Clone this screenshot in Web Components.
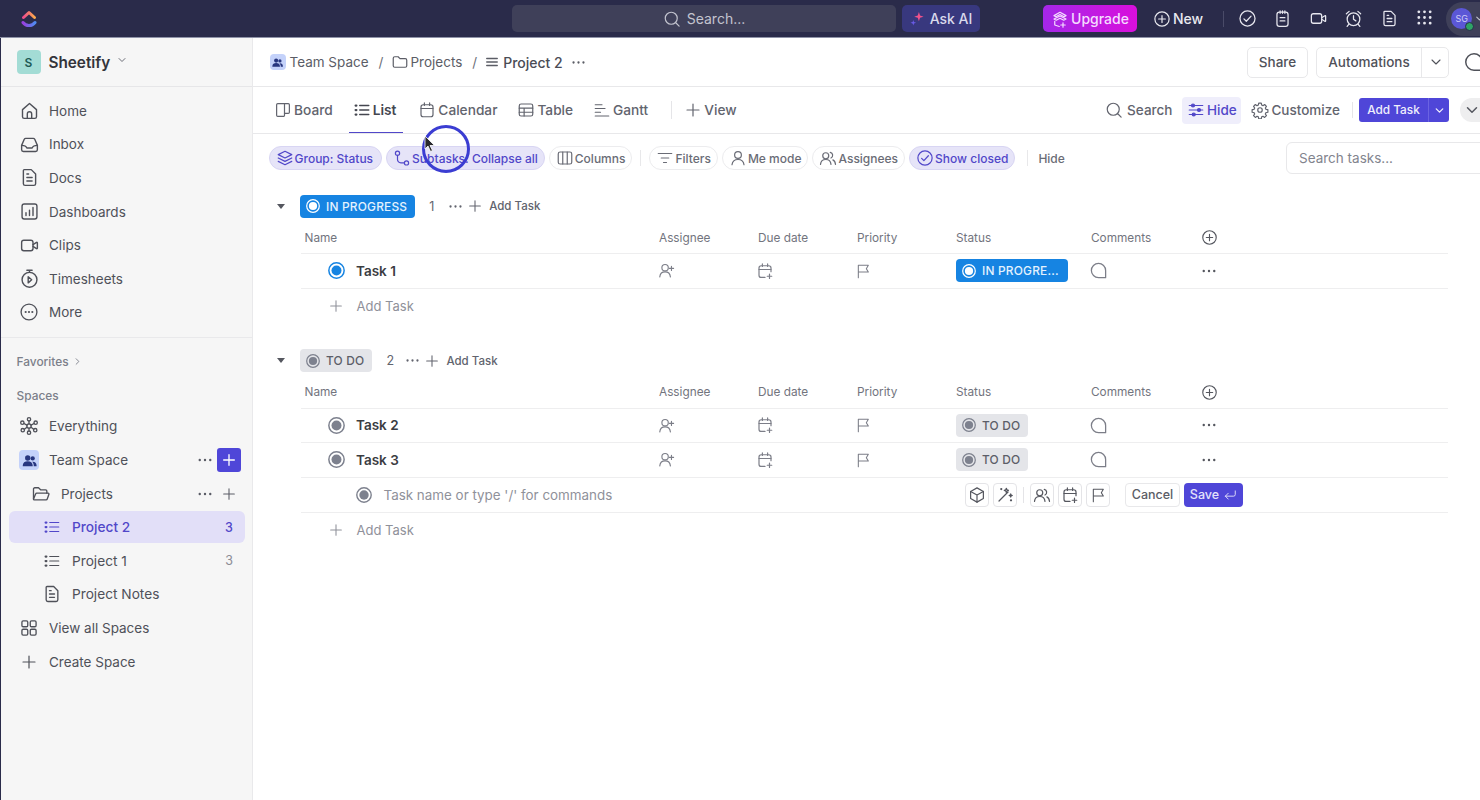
<!DOCTYPE html>
<html lang="en">
<head>
<meta charset="utf-8">
<title>Project 2</title>
<style>
  html, body { margin: 0; height: 100%; overflow: hidden; background: #fff; }
  body { font-family: Inter, "Liberation Sans", sans-serif; color: #4f5159; }
</style>
</head>
<body>
<cu-app></cu-app>

<script>
//Icon paths, all on a 24 box
const ICONS = {
  home: '<path d="M4 11l8-7 8 7v8a2 2 0 0 1-2 2H6a2 2 0 0 1-2-2z"/><path d="M9.500 21v-5a2.500 2.500 0 0 1 5 0v5"/>',
  inbox: '<path d="M3 13l3-7a2 2 0 0 1 2-1h8a2 2 0 0 1 2 1l3 7v5a2 2 0 0 1-2 2H5a2 2 0 0 1-2-2z"/><path d="M3 13c3 0 5 .5 6 3h6c1-2.500 3-3 6-3"/>',
  doc: '<path d="M6 3h8l5 5v11a2 2 0 0 1-2 2H7a2 2 0 0 1-2-2V4a1 1 0 0 1 1-1z"/><path d="M9 12h6M9 16h6M9 8h2"/>',
  dash: '<rect x="3.500" y="3.500" width="17" height="17" rx="2.500"/><path d="M8 16.500v-3M12 16.500v-6M16 16.500v-9"/>',
  clip: '<rect x="3" y="6" width="13" height="12" rx="2.500"/><path d="M16 11l4-2.500a.6.6 0 0 1 1 .5v6a.6.6 0 0 1-1 .5L16 13"/>',
  timer: '<circle cx="12" cy="13.500" r="8.500"/><path d="M9 2.500h6M12 2.500v2.500"/><path d="M10.500 10l4 3.500-4 3.500z"/>',
  more: '<circle cx="12" cy="12" r="9.500"/><path d="M8 12h.01M12 12h.01M16 12h.01" stroke-width="2.600" stroke-linecap="round"/>',
  everything: '<circle cx="12" cy="12" r="2.600"/><circle cx="12" cy="4" r="2"/><circle cx="12" cy="20" r="2"/><circle cx="4" cy="8" r="2"/><circle cx="20" cy="8" r="2"/><circle cx="4.500" cy="17" r="2"/><circle cx="19.500" cy="17" r="2"/><path d="M12 6v3.500M12 14.500V18M6 9l3.500 2M18 9l-3.500 2M6.500 16l3-2.500M17.500 16l-3-2.500"/>',
  folderOpen: '<path d="M3 18V6a1.500 1.500 0 0 1 1.500-1.500h4.500l2.500 2.500h6a1.500 1.500 0 0 1 1.500 1.500V11"/><path d="M3 18l2.500-6a1.500 1.500 0 0 1 1.400-1h13.600a1 1 0 0 1 1 1.400L19.500 18a1.500 1.500 0 0 1-1.400 1H4a1 1 0 0 1-1-1z"/>',
  folder: '<path d="M3 7a2 2 0 0 1 2-2h4.500l2.500 2.500h7a2 2 0 0 1 2 2V17a2 2 0 0 1-2 2H5a2 2 0 0 1-2-2z"/>',
  list: '<path d="M9 6h12M9 12h12M9 18h12"/><path d="M3.500 6h1M3.500 12h1M3.500 18h1" stroke-width="3" stroke-linecap="round"/>',
  listThin: '<path d="M3 6h18M3 12h18M3 18h18"/>',
  grid4: '<rect x="3.500" y="3.500" width="7" height="7" rx="1.500"/><rect x="13.500" y="3.500" width="7" height="7" rx="1.500"/><rect x="3.500" y="13.500" width="7" height="7" rx="1.500"/><rect x="13.500" y="13.500" width="7" height="7" rx="1.500"/>',
  plus: '<path d="M12 4v16M4 12h16"/>',
  chevDown: '<path d="M6 9l6 6 6-6"/>',
  chevRight: '<path d="M9 6l6 6-6 6"/>',
  dots: '<path d="M5 12h.01M12 12h.01M19 12h.01" stroke-width="3.200" stroke-linecap="round"/>',
  search: '<circle cx="11" cy="11" r="8"/><path d="M17 17l4.500 4.500"/>',
  board: '<path d="M5 3.500h14a1.500 1.500 0 0 1 1.500 1.500v10a1.500 1.500 0 0 1-1.500 1.500h-5V19a1.500 1.500 0 0 1-1.500 1.500H5A1.500 1.500 0 0 1 3.500 19V5A1.500 1.500 0 0 1 5 3.500z"/><path d="M14 3.500v13"/>',
  calendar: '<rect x="4" y="5" width="16" height="16" rx="3"/><path d="M4 10h16M8.500 2.500V6M15.500 2.500V6"/>',
  table: '<rect x="3" y="4" width="18" height="16" rx="2.500"/><path d="M3 9.500h18M3 15h18M9.500 9.500V20"/>',
  gantt: '<path d="M3 5h9M3 10h13M3 15h7M3 20h18"/>',
  sliders: '<path d="M3 6h18M3 12h18M3 18h18"/><circle cx="8" cy="6" r="2" fill="currentColor"/><circle cx="16" cy="12" r="2" fill="currentColor"/><circle cx="9" cy="18" r="2" fill="currentColor"/>',
  gear: '<circle cx="12" cy="12" r="3"/><path d="M10.300 2.800h3.400l.5 2.600 1.800.8 2.200-1.500 2.400 2.400-1.500 2.200.8 1.800 2.600.5v3.400l-2.600.5-.8 1.800 1.500 2.200-2.400 2.400-2.200-1.500-1.800.8-.5 2.600h-3.400l-.5-2.600-1.800-.8-2.200 1.500-2.400-2.400 1.500-2.200-.8-1.800-2.600-.5v-3.400l2.600-.5.8-1.800-1.500-2.200 2.400-2.400 2.200 1.500 1.800-.8z"/>',
  layers: '<path d="M12 3l9 4.500-9 4.500-9-4.500z"/><path d="M3 12l9 4.500 9-4.500M3 16.500l9 4.500 9-4.500"/>',
  subtasks: '<circle cx="6" cy="5.500" r="2.800"/><circle cx="18" cy="18.500" r="2.800"/><path d="M6 8.300V14a4.500 4.500 0 0 0 4.500 4.500h4.700"/>',
  columns: '<rect x="3" y="4" width="18" height="16" rx="2.500"/><path d="M9 4v16M15 4v16"/>',
  filter: '<path d="M3 6h18M7 12h10M10 18h4"/>',
  person: '<circle cx="12" cy="8" r="4.500"/><path d="M4 21c.5-4.500 3.500-7 8-7s7.500 2.500 8 7"/>',
  people: '<circle cx="9" cy="9" r="4"/><path d="M2 20.500c.4-4 3-6.500 7-6.500s6.600 2.500 7 6.500"/><path d="M15 4.500a4 4 0 0 1 1 7.500M18.500 14.500c2 .9 3.200 3 3.500 6"/>',
  checkCircle: '<circle cx="12" cy="12" r="9.500"/><path d="M7.500 12.500l3 3 6-6.500"/>',
  plusCircle: '<circle cx="12" cy="12" r="9.500"/><path d="M12 7.500v9M7.500 12h9"/>',
  addUser: '<circle cx="10" cy="8" r="4.500"/><path d="M2.500 21c.5-4.500 3.500-7 7.500-7s7 2.500 7.500 7"/><path d="M19 6v6M16 9h6"/>',
  dueAdd: '<path d="M12 20.500H7a3 3 0 0 1-3-3V8a3 3 0 0 1 3-3h10a3 3 0 0 1 3 3v5"/><path d="M4 10h16M8.500 2.500V6M15.500 2.500V6M18 16v6M15 19h6"/>',
  flag: '<path d="M5 22V3.500h15l-3 5 3 5H5"/>',
  comment: '<path d="M12 3a9 9 0 1 0 0 18h9v-9a9 9 0 0 0-9-9z"/>',
  cube: '<path d="M12 2.500l8.500 4.800v9.400L12 21.500l-8.500-4.800V7.300z"/><path d="M3.500 7.300L12 12l8.500-4.700M12 12v9.500"/>',
  wand: '<path d="M4 20L16 8"/><path d="M13 5l.8-2 .8 2 2 .8-2 .8-.8 2-.8-2-2-.8zM19 12l.6-1.500.6 1.500 1.500.6-1.500.6-.6 1.500-.6-1.500-1.500-.6z"/><path d="M7 4h.01M20 19h.01" stroke-width="3" stroke-linecap="round"/>',
  enter: '<path d="M21 5v6a3 3 0 0 1-3 3H4"/><path d="M9 9l-5 5 5 5"/>',
  clipboard: '<rect x="5" y="4" width="14" height="18" rx="3"/><path d="M9 2.500v3M15 2.500v3M12 2.500v3M9 11h6M9 15h6"/>',
  alarm: '<circle cx="12" cy="13" r="8"/><path d="M12 8.500V13l3 2M3 6l3.500-3M21 6l-3.500-3M6 19.500L4 22M18 19.500l2 2.500"/>',
  apps: '<path d="M4 4h.01M12 4h.01M20 4h.01M4 12h.01M12 12h.01M20 12h.01M4 20h.01M12 20h.01M20 20h.01" stroke-width="4" stroke-linecap="round"/>',
  upgrade: '<path d="M12 3l8 4.500-2.500 1.500L12 6 6.500 9 4 7.500z"/><path d="M4 12l8-4 8 4-3 1.600-5-2.600-5 2.600zM5 15v5l6 2M16 17v6M13 20h6"/>',
  teamFill: '<circle cx="9.500" cy="8.500" r="3.800" fill="currentColor" stroke="none"/><circle cx="16.500" cy="9" r="3" fill="currentColor" stroke="none"/><path d="M2.500 19c0-4 3-6 7-6s7 2 7 6v1h-14zM18 20v-1c0-2-.8-4-2.300-5.300 3.500-.6 6.300 1.600 6.300 5.300v1z" fill="currentColor" stroke="none"/>'
};

//Single stroke icon, used everywhere. name + size attributes
class CuIcon extends HTMLElement {
  connectedCallback() {
    const size = this.getAttribute("size") || 16;
    const sw = this.getAttribute("sw") || 1.6;
    const root = this.shadowRoot || this.attachShadow({ mode: "open" });
    root.innerHTML = `
      <style>:host { display: inline-flex; flex: none; width: ${size}px; height: ${size}px; } svg { display: block; }</style>
      <svg width="${size}" height="${size}" viewBox="0 0 24 24" fill="none" stroke="currentColor" stroke-width="${sw}" stroke-linecap="round" stroke-linejoin="round">${ICONS[this.getAttribute("name")] || ""}</svg>`;
  }
}
customElements.define("cu-icon", CuIcon);

//Status circle: ring + dot
class CuStatusDot extends HTMLElement {
  connectedCallback() {
    const size = this.getAttribute("size") || 16;
    this.attachShadow({ mode: "open" }).innerHTML = `
      <style>:host { display: inline-flex; flex: none; width: ${size}px; height: ${size}px; } svg { display: block; }</style>
      <svg width="${size}" height="${size}" viewBox="0 0 16 16"><circle cx="8" cy="8" r="7.200" fill="none" stroke="currentColor" stroke-width="1.400"/><circle cx="8" cy="8" r="4.700" fill="currentColor"/></svg>`;
  }
}
customElements.define("cu-status-dot", CuStatusDot);

//Team space square
class CuTeamBadge extends HTMLElement {
  connectedCallback() {
    const size = this.getAttribute("size") || 20;
    this.attachShadow({ mode: "open" }).innerHTML = `
      <style>
        :host { display: inline-flex; flex: none; align-items: center; justify-content: center; width: ${size}px; height: ${size}px; border-radius: 4px; background: #c4d2fa; color: #27367f; }
      </style>
      <cu-icon name="teamFill" size="${size - 3}"></cu-icon>`;
  }
}
customElements.define("cu-team-badge", CuTeamBadge);

//Top dark bar
const topbarTemp = document.createElement("template");
topbarTemp.innerHTML = `
<style>
  :host { display: flex; align-items: center; height: 38px; background: #2a2b4a; border-bottom: 1px solid #8f93a8; box-sizing: border-box; color: #fff; overflow: hidden; flex: none; }
  .logo { margin-left: 21px; width: 16px; height: 18px; flex: none; }
  .search { margin-left: 475px; width: 384px; height: 27px; flex: none; border-radius: 5px; background: #3f4059; color: #c3c4cf; display: flex; align-items: center; justify-content: center; gap: 6px; font-size: 14px; box-sizing: border-box; }
  .ai { margin-left: 6px; width: 78px; height: 27px; flex: none; border-radius: 5px; background: #38387e; display: flex; align-items: center; justify-content: center; gap: 5px; font-size: 14px; color: #d9d9ec; font-weight: 500; box-sizing: border-box; }
  .upgrade { margin-left: 63px; width: 94px; height: 27px; flex: none; border-radius: 5px; background: linear-gradient(90deg, #a427e8, #d90fdc); display: flex; align-items: center; justify-content: center; gap: 2px; font-size: 14px; font-weight: 500; color: #f4dcff; }
  .new { margin-left: 16px; display: flex; align-items: center; gap: 2px; font-size: 14px; font-weight: 500; color: #e9e9ef; }
  .sep { margin-left: 20px; width: 1px; height: 16px; background: #4a4b68; flex: none; }
  .tools { margin-left: 13.500px; display: flex; gap: 16.600px; color: #e6e6ee; }
  .me { margin-left: 13.500px; width: 40px; height: 34px; flex: none; border-radius: 17px 0 0 17px; background: #3f4059; display: flex; align-items: center; padding-left: 5px; box-sizing: border-box; position: relative; }
  .avatar { width: 21px; height: 21px; border-radius: 50%; background: #5b57d6; color: #cfcdf6; font-size: 9px; display: flex; align-items: center; justify-content: center; }
  .online { position: absolute; left: 19px; top: 20px; width: 7px; height: 7px; border-radius: 50%; background: #2ea365; border: 1px solid #2a2b4a; }
  .mecaret { margin-left: 2px; color: #c3c4cf; }
</style>
<svg class="logo" viewBox="0 0 16 18" fill="none" stroke-width="3" stroke-linecap="round" stroke-linejoin="round">
  <defs>
    <linearGradient id="up" x1="0" y1="0" x2="1" y2="0"><stop offset="0" stop-color="#ee4d8b"/><stop offset="1" stop-color="#fba94c"/></linearGradient>
    <linearGradient id="lo" x1="0" y1="0" x2="1" y2="0"><stop offset="0" stop-color="#9a3fe0"/><stop offset="1" stop-color="#4f8bf0"/></linearGradient>
  </defs>
  <path d="M2.500 7.500L8 2.500l5.500 5" stroke="url(#up)"/>
  <path d="M2 12.500c3 4 9 4 12 0" stroke="url(#lo)"/>
</svg>
<div class="search"><cu-icon name="search" size="18"></cu-icon><span>Search...</span></div>
<div class="ai">
  <svg width="15" height="15" viewBox="0 0 16 16"><path d="M9.500 1l1.200 3.800L14.500 6l-3.800 1.200L9.500 11 8.300 7.200 4.500 6l3.800-1.200z" fill="#f0528c"/><path d="M3.500 9.500l.7 2.300 2.300.7-2.300.7-.7 2.300-.7-2.300-2.300-.7 2.300-.7z" fill="#6a5be8"/></svg>
  <span>Ask AI</span>
</div>
<div class="upgrade"><cu-icon name="upgrade" size="18"></cu-icon><span>Upgrade</span></div>
<div class="new"><cu-icon name="plusCircle" size="18"></cu-icon><span>New</span></div>
<div class="sep"></div>
<div class="tools">
  <cu-icon name="checkCircle" size="19"></cu-icon>
  <cu-icon name="clipboard" size="19"></cu-icon>
  <cu-icon name="clip" size="19"></cu-icon>
  <cu-icon name="alarm" size="19"></cu-icon>
  <cu-icon name="doc" size="19"></cu-icon>
  <cu-icon name="apps" size="17"></cu-icon>
</div>
<div class="me"><div class="avatar">SG</div><div class="online"></div><cu-icon class="mecaret" name="chevDown" size="11" sw="2.400"></cu-icon></div>
`;
class CuTopbar extends HTMLElement {
  constructor() {
    super();
    this.attachShadow({ mode: "open" });
    this.shadowRoot.appendChild(topbarTemp.content.cloneNode(true));
  }
}
customElements.define("cu-topbar", CuTopbar);

//One row of the sidebar
const navTemp = document.createElement("template");
navTemp.innerHTML = `
<style>
  :host { display: flex; align-items: center; height: 33.600px; font-size: 13.500px; color: #4f5159; position: relative; }
  .row { display: flex; align-items: center; flex: 1; height: 100%; min-width: 0; }
  .label { flex: 1; white-space: nowrap; }
  :host([active]) { color: #5147c9; font-weight: 500; }
  :host([active])::before { content: ""; position: absolute; left: 8px; right: 7px; top: 1px; bottom: 1px; background: #e2dff8; border-radius: 6px; }
  .row > * { position: relative; }
  .ic { width: 20px; display: flex; justify-content: center; margin-right: 10px; flex: none; }
  .end { display: flex; align-items: center; }
</style>
<div class="row">
  <span class="ic"><slot name="icon"></slot></span>
  <span class="label"><slot></slot></span>
  <span class="end"><slot name="end"></slot></span>
</div>
`;
class CuNavItem extends HTMLElement {
  constructor() {
    super();
    this.attachShadow({ mode: "open" });
    this.shadowRoot.appendChild(navTemp.content.cloneNode(true));
    const indent = this.getAttribute("indent") || 18;
    this.shadowRoot.querySelector(".row").style.paddingLeft = indent + "px";
  }
}
customElements.define("cu-nav-item", CuNavItem);

//Left column
const sidebarTemp = document.createElement("template");
sidebarTemp.innerHTML = `
<style>
  :host { display: flex; flex-direction: column; width: 251px; flex: none; background: #f6f6f6; border-right: 1px solid #e9e9eb; border-left: 1.500px solid #2a2b4a; box-sizing: content-box; }
  .head { display: flex; align-items: center; height: 48px; padding-left: 15.500px; border-bottom: 1px solid #e6e6e8; gap: 8px; flex: none; }
  .ws { width: 24px; height: 24px; border-radius: 4px; background: #a3dcd5; color: #1e5a55; font-size: 12px; font-weight: 600; display: flex; align-items: center; justify-content: center; }
  .name { font-size: 15.300px; font-weight: 600; color: #33343a; }
  .nav { padding-top: 7px; padding-bottom: 7.500px; border-bottom: 1px solid #e9e9eb; }
  .title { font-size: 11.900px; font-weight: 500; color: #7c7f8a; padding-left: 15.500px; display: flex; align-items: center; gap: 3px; }
  .fav { height: 16px; margin-top: 16px; }
  .sp { height: 16px; margin-top: 18px; margin-bottom: 6px; }
  .dots { color: #5a5c66; margin-right: 3px; }
  .add { width: 24px; height: 24px; border-radius: 3px; background: #4f46d8; color: #fff; display: flex; align-items: center; justify-content: center; margin-right: 11px; }
  .addp { color: #5a5c66; width: 24px; display: flex; justify-content: center; margin-right: 11px; }
  .count { font-size: 12.500px; width: 24px; text-align: center; margin-right: 11px; color: #8a8c95; font-weight: 400; }
  .count.on { color: #5147c9; font-weight: 500; }
</style>
<div class="head">
  <div class="ws">S</div>
  <div class="name">Sheetify</div>
  <cu-icon name="chevDown" size="12" style="color:#6c6e78;margin:-4px 0 0 -2px" sw="2"></cu-icon>
</div>
<div class="nav">
  <cu-nav-item><cu-icon slot="icon" name="home" size="21"></cu-icon>Home</cu-nav-item>
  <cu-nav-item><cu-icon slot="icon" name="inbox" size="21"></cu-icon>Inbox</cu-nav-item>
  <cu-nav-item><cu-icon slot="icon" name="doc" size="21"></cu-icon>Docs</cu-nav-item>
  <cu-nav-item><cu-icon slot="icon" name="dash" size="21"></cu-icon>Dashboards</cu-nav-item>
  <cu-nav-item><cu-icon slot="icon" name="clip" size="21"></cu-icon>Clips</cu-nav-item>
  <cu-nav-item><cu-icon slot="icon" name="timer" size="21"></cu-icon>Timesheets</cu-nav-item>
  <cu-nav-item><cu-icon slot="icon" name="more" size="20"></cu-icon>More</cu-nav-item>
</div>
<div class="title fav">Favorites <cu-icon name="chevRight" size="11" sw="2"></cu-icon></div>
<div class="title sp">Spaces</div>
<cu-nav-item><cu-icon slot="icon" name="everything" size="20"></cu-icon>Everything</cu-nav-item>
<cu-nav-item>
  <cu-team-badge slot="icon" size="20"></cu-team-badge>Team Space
  <cu-icon slot="end" class="dots" name="dots" size="18"></cu-icon>
  <span slot="end" class="add"><cu-icon name="plus" size="16" sw="2"></cu-icon></span>
</cu-nav-item>
<cu-nav-item indent="30">
  <cu-icon slot="icon" name="folderOpen" size="20"></cu-icon>Projects
  <cu-icon slot="end" class="dots" name="dots" size="18"></cu-icon>
  <span slot="end" class="addp"><cu-icon name="plus" size="16"></cu-icon></span>
</cu-nav-item>
<cu-nav-item indent="41" active style="font-size:13.700px">
  <cu-icon slot="icon" name="list" size="18" style="color:#5147c9"></cu-icon>Project 2
  <span slot="end" class="count on">3</span>
</cu-nav-item>
<cu-nav-item indent="41" style="font-size:13.700px">
  <cu-icon slot="icon" name="list" size="18"></cu-icon>Project 1
  <span slot="end" class="count">3</span>
</cu-nav-item>
<cu-nav-item indent="41" style="font-size:13.700px"><cu-icon slot="icon" name="doc" size="20"></cu-icon>Project Notes</cu-nav-item>
<cu-nav-item><cu-icon slot="icon" name="grid4" size="20"></cu-icon>View all Spaces</cu-nav-item>
<cu-nav-item><cu-icon slot="icon" name="plus" size="18"></cu-icon>Create Space</cu-nav-item>
`;
class CuSidebar extends HTMLElement {
  constructor() {
    super();
    this.attachShadow({ mode: "open" });
    this.shadowRoot.appendChild(sidebarTemp.content.cloneNode(true));
  }
}
customElements.define("cu-sidebar", CuSidebar);

//Breadcrumb row
const crumbTemp = document.createElement("template");
crumbTemp.innerHTML = `
<style>
  :host { display: flex; align-items: center; height: 48px; border-bottom: 1px solid #e8e8ea; font-size: 13.500px; color: #5b5d66; padding-left: 16.500px; flex: none; white-space: nowrap; overflow: hidden; }
  .sl { margin: 0 8px 0 10px; color: #6c6e78; }
  .cur { font-weight: 500; font-size: 14px; color: #4a4c55; margin-left: 4px; }
  .btn { height: 31px; border: 1px solid #e8e8ea; border-radius: 5px; display: flex; align-items: center; box-sizing: border-box; font-weight: 500; color: #4f5159; background: #fff; flex: none; }
  .share { margin-left: auto; width: 61px; justify-content: center; }
  .auto { margin-left: 8px; width: 133px; }
  .auto span { width: 104px; text-align: center; border-right: 1px solid #e8e8ea; line-height: 29px; }
  .auto cu-icon { margin-left: 6px; }
  .chat { margin-left: 14px; margin-right: -5px; color: #4f5159; }
</style>
<cu-team-badge size="16"></cu-team-badge>
<span style="margin-left:4px">Team Space</span>
<span class="sl">/</span>
<cu-icon name="folder" size="18"></cu-icon>
<span style="margin-left:1px">Projects</span>
<span class="sl">/</span>
<cu-icon name="listThin" size="14" sw="2.400"></cu-icon>
<span class="cur">Project 2</span>
<cu-icon name="dots" size="17" style="margin-left:7.500px"></cu-icon>
<div class="btn share">Share</div>
<div class="btn auto"><span>Automations</span><cu-icon name="chevDown" size="16"></cu-icon></div>
<cu-icon class="chat" name="comment" size="22"></cu-icon>
`;
class CuCrumbs extends HTMLElement {
  constructor() {
    super();
    this.attachShadow({ mode: "open" });
    this.shadowRoot.appendChild(crumbTemp.content.cloneNode(true));
  }
}
customElements.define("cu-crumbs", CuCrumbs);

//View tabs row
const tabsTemp = document.createElement("template");
tabsTemp.innerHTML = `
<style>
  :host { display: flex; align-items: center; height: 46px; border-bottom: 1px solid #e8e8ea; font-size: 13.700px; color: #62646e; padding-left: 21px; flex: none; white-space: nowrap; overflow: hidden; font-weight: 500; }
  .tab { display: flex; align-items: center; gap: 2px; height: 100%; box-sizing: border-box; position: relative; margin-right: 20px; }
  .tab.on { color: #44464f; font-weight: 600; margin-right: 22px; }
  .tab.on::after { content: ""; position: absolute; left: -4px; right: -7px; bottom: -1px; height: 2px; background: #5147c9; }
  .sep { width: 1px; height: 18px; background: #e5e5e8; margin: 0 12px 0 3px; }
  .right { margin-left: auto; display: flex; align-items: center; font-size: 13.500px; }
  .item { display: flex; align-items: center; gap: 4px; }
  .hide { width: 59px; height: 27px; border-radius: 4px; background: #efeefb; color: #5147c9; justify-content: center; gap: 2px; margin-left: 10px; }
  .cust { margin-left: 10px; gap: 2px; }
  .sep2 { width: 1px; height: 16px; background: #e5e5e8; margin: 0 6px 0 12px; }
  .addtask { width: 90px; height: 24px; border-radius: 3px; background: #4f46d8; color: #f0effc; font-size: 11.800px; display: flex; align-items: center; }
  .addtask span { width: 69px; text-align: center; line-height: 24px; border-right: 1px solid #6b63e2; }
  .addtask cu-icon { margin-left: 4px; }
  .circle { width: 32px; height: 24px; border-radius: 12px 0 0 12px; background: #eeeeef; margin-left: 11px; margin-right: -12px; display: flex; align-items: center; padding-left: 3px; box-sizing: border-box; color: #55575f; }
</style>
<div class="tab"><cu-icon name="board" size="18"></cu-icon>Board</div>
<div class="tab on"><cu-icon name="list" size="18" sw="2"></cu-icon>List</div>
<div class="tab"><cu-icon name="calendar" size="18"></cu-icon>Calendar</div>
<div class="tab"><cu-icon name="table" size="18"></cu-icon>Table</div>
<div class="tab"><cu-icon name="gantt" size="18"></cu-icon>Gantt</div>
<div class="sep"></div>
<div class="tab"><cu-icon name="plus" size="18"></cu-icon>View</div>
<div class="right">
  <div class="item"><cu-icon name="search" size="18"></cu-icon>Search</div>
  <div class="item hide"><cu-icon name="sliders" size="18"></cu-icon>Hide</div>
  <div class="item cust"><cu-icon name="gear" size="18"></cu-icon>Customize</div>
  <div class="sep2"></div>
  <div class="addtask"><span>Add Task</span><cu-icon name="chevDown" size="13" sw="2.400"></cu-icon></div>
  <div class="circle"><cu-icon name="chevDown" size="18" sw="2"></cu-icon></div>
</div>
`;
class CuTabs extends HTMLElement {
  constructor() {
    super();
    this.attachShadow({ mode: "open" });
    this.shadowRoot.appendChild(tabsTemp.content.cloneNode(true));
  }
}
customElements.define("cu-tabs", CuTabs);

//Rounded filter chip
const chipTemp = document.createElement("template");
chipTemp.innerHTML = `
<style>
  :host { display: inline-flex; align-items: center; gap: 1px; height: 24px; padding: 0 6px 0 6px; box-sizing: border-box; border-radius: 12px; border: 1px solid #ececee; background: #fff; color: #6a6c76; font-size: 12px; font-weight: 500; white-space: nowrap; flex: none; }
  :host([on]) { background: #e6e4f8; border-color: #d8d5f3; color: #5147c9; }
</style>
<slot></slot>
`;
class CuChip extends HTMLElement {
  constructor() {
    super();
    this.attachShadow({ mode: "open" });
    this.shadowRoot.appendChild(chipTemp.content.cloneNode(true));
  }
}
customElements.define("cu-chip", CuChip);

const filtersTemp = document.createElement("template");
filtersTemp.innerHTML = `
<style>
  :host { display: flex; align-items: center; gap: 4px; height: 48px; padding: 0 0 0 15.500px; flex: none; box-sizing: border-box; overflow: hidden; }
  .sep { width: 1px; height: 16px; background: #e8e8ea; margin: 0 4px; flex: none; }
  .hide { font-size: 12px; font-weight: 500; color: #6a6c76; margin-left: 2px; }
  .find { margin-left: auto; margin-right: -20px; width: 214px; height: 32px; border: 1px solid #e8e8ea; border-radius: 6px; box-sizing: border-box; color: #82848e; font-size: 13.500px; display: flex; align-items: center; padding-left: 12px; flex: none; }
</style>
<cu-chip on style="padding-right:8px"><cu-icon name="layers" size="18"></cu-icon>Group: Status</cu-chip>
<cu-chip on><cu-icon name="subtasks" size="18"></cu-icon>Subtasks: Collapse all</cu-chip>
<cu-chip><cu-icon name="columns" size="18"></cu-icon>Columns</cu-chip>
<div class="sep"></div>
<cu-chip><cu-icon name="filter" size="18"></cu-icon>Filters</cu-chip>
<cu-chip><cu-icon name="person" size="18"></cu-icon>Me mode</cu-chip>
<cu-chip><cu-icon name="people" size="18"></cu-icon>Assignees</cu-chip>
<cu-chip on><cu-icon name="checkCircle" size="18"></cu-icon>Show closed</cu-chip>
<div class="sep" style="margin-left:8px"></div>
<div class="hide">Hide</div>
<div class="find">Search tasks...</div>
`;
class CuFilters extends HTMLElement {
  constructor() {
    super();
    this.attachShadow({ mode: "open" });
    this.shadowRoot.appendChild(filtersTemp.content.cloneNode(true));
  }
}
customElements.define("cu-filters", CuFilters);

//Status pill, used on group head and in the Status column
const pillTemp = document.createElement("template");
pillTemp.innerHTML = `
<style>
  :host { display: inline-flex; align-items: center; gap: 6px; height: 23px; padding: 0 8px 0 6px; border-radius: 4px; box-sizing: border-box; font-size: 11.900px; font-weight: 500; letter-spacing: .2px; white-space: nowrap; background: #e4e5e9; color: #5c5e68; flex: none; }
  :host([kind="progress"]) { background: #1684e2; color: #e4f2fe; }
  cu-status-dot { color: #7d818e; }
  :host([kind="progress"]) cu-status-dot { color: #fff; }
</style>
<cu-status-dot size="14"></cu-status-dot><slot></slot>
`;
class CuPill extends HTMLElement {
  constructor() {
    super();
    this.attachShadow({ mode: "open" });
    this.shadowRoot.appendChild(pillTemp.content.cloneNode(true));
  }
}
customElements.define("cu-pill", CuPill);

//Shared grid of the task table
const GRID = "display: grid; grid-template-columns: 358px 99px 99px 99px 135px 118px 1fr; align-items: center;";

//One task
class CuTask extends HTMLElement {
  constructor() {
    super();
    const kind = this.getAttribute("kind");
    const name = this.getAttribute("name");
    this.attachShadow({ mode: "open" }).innerHTML = `
      <style>
        :host { display: block; }
        .row { ${GRID} height: 34.500px; border-bottom: 1px solid #eeeeef; box-sizing: border-box; color: #7c7e88; }
        .row > div { display: flex; align-items: center; }
        .name { gap: 11px; padding-left: 27px; font-size: 13.500px; font-weight: 600; color: #3b3c42; }
        .dot { color: ${kind === "progress" ? "#1684e2" : "#7d818e"}; }
        .dots { color: #55575f; margin-left: -9px; }
        .pill-wide { width: 112px; }
      </style>
      <div class="row">
        <div class="name"><cu-status-dot class="dot" size="17"></cu-status-dot>${name}</div>
        <div><cu-icon name="addUser" size="17" style="margin-left:-1px"></cu-icon></div>
        <div><cu-icon name="dueAdd" size="18" style="margin-left:-2.500px"></cu-icon></div>
        <div><cu-icon name="flag" size="16" style="margin-left:-2.500px"></cu-icon></div>
        <div><cu-pill kind="${kind}" class="${kind === "progress" ? "pill-wide" : ""}">${this.getAttribute("status")}</cu-pill></div>
        <div><cu-icon name="comment" size="19" style="margin-left:-2px"></cu-icon></div>
        <div><cu-icon class="dots" name="dots" size="18"></cu-icon></div>
      </div>`;
  }
}
customElements.define("cu-task", CuTask);

//Inline "new task" row
const newTaskTemp = document.createElement("template");
newTaskTemp.innerHTML = `
<style>
  :host { display: flex; align-items: center; height: 35px; border-bottom: 1px solid #eeeeef; box-sizing: border-box; padding-left: 55px; }
  cu-status-dot { color: #7d818e; }
  .ph { font-size: 13.400px; color: #8f919a; margin-left: 11.500px; flex: 1; white-space: nowrap; }
  .tool { width: 24px; height: 24px; border: 1px solid #e4e4e7; border-radius: 4px; box-sizing: border-box; display: flex; align-items: center; justify-content: center; color: #55575f; margin-right: 4px; }
  .sep { width: 1px; height: 16px; background: #e4e4e7; margin: 0 6px 0 2px; }
  .cancel { width: 55px; height: 24px; border: 1px solid #e8e8ea; border-radius: 4px; box-sizing: border-box; font-size: 12.500px; font-weight: 500; color: #5b5d66; display: flex; align-items: center; justify-content: center; margin: 0 4px 0 15px; }
  .save { width: 59px; height: 24px; border-radius: 4px; background: #4f46d8; color: #e4e2fb; font-size: 12.500px; font-weight: 500; display: flex; align-items: center; justify-content: center; gap: 4px; margin-right: 205px; }
</style>
<cu-status-dot size="16"></cu-status-dot>
<div class="ph">Task name or type '/' for commands</div>
<div class="tool"><cu-icon name="cube" size="18"></cu-icon></div>
<div class="tool"><cu-icon name="wand" size="18"></cu-icon></div>
<div class="sep"></div>
<div class="tool"><cu-icon name="people" size="18"></cu-icon></div>
<div class="tool"><cu-icon name="dueAdd" size="18"></cu-icon></div>
<div class="tool" style="margin-right:0"><cu-icon name="flag" size="16"></cu-icon></div>
<div class="cancel">Cancel</div>
<div class="save">Save<cu-icon name="enter" size="14"></cu-icon></div>
`;
class CuNewTask extends HTMLElement {
  constructor() {
    super();
    this.attachShadow({ mode: "open" });
    this.shadowRoot.appendChild(newTaskTemp.content.cloneNode(true));
  }
}
customElements.define("cu-new-task", CuNewTask);

//Status group: head, column titles, slotted rows, Add Task
class CuGroup extends HTMLElement {
  constructor() {
    super();
    const kind = this.getAttribute("kind");
    this.attachShadow({ mode: "open" }).innerHTML = `
      <style>
        :host { display: block; }
        .head { display: flex; align-items: center; height: 24px; font-size: 11.500px; color: #62646e; font-weight: 500; }
        .caret { width: 0; height: 0; border-left: 4.500px solid transparent; border-right: 4.500px solid transparent; border-top: 5px solid #55575f; margin: 0 15.500px 0 -24.500px; }
        .count { margin-left: 14px; width: 14px; font-weight: 400; font-size: 12.500px; }
        .hadd { display: flex; align-items: center; gap: 6px; margin-left: 3px; }
        .titles { ${GRID} height: 36px; padding-top: 4px; box-sizing: border-box; font-size: 11.800px; color: #72747e; border-bottom: 1px solid #eeeeef; }
        .titles div { display: flex; align-items: center; }
        .titles div:first-child { padding-left: 3.500px; }
        .add { display: flex; align-items: center; height: 35px; padding: 0 0 1px 27px; box-sizing: border-box; gap: 12.500px; font-size: 13px; color: #8f919a; }
      </style>
      <div class="head">
        <span class="caret"></span>
        <cu-pill kind="${kind}">${this.getAttribute("label")}</cu-pill>
        <span class="count">${this.getAttribute("count")}</span>
        <cu-icon name="dots" size="17" style="margin-left:4px"></cu-icon>
        <span class="hadd"><cu-icon name="plus" size="16"></cu-icon>Add Task</span>
      </div>
      <div class="titles">
        <div>Name</div><div>Assignee</div><div>Due date</div><div>Priority</div><div>Status</div><div>Comments</div>
        <div><cu-icon name="plusCircle" size="17" style="color:#55575f;margin-left:-8.500px"></cu-icon></div>
      </div>
      <slot></slot>
      <div class="add"><cu-icon name="plus" size="16"></cu-icon>Add Task</div>`;
  }
}
customElements.define("cu-group", CuGroup);

//Main page shell
const appTemp = document.createElement("template");
appTemp.innerHTML = `
<style>
  :host { display: flex; flex-direction: column; width: 1480px; height: 800px; overflow: hidden; position: relative; }
  .body { display: flex; flex: 1; min-height: 0; }
  main { flex: 1; min-width: 0; display: flex; flex-direction: column; background: #fff; }
  .lists { padding: 12px 32px 0 48px; display: flex; flex-direction: column; gap: 25px; }
  .ring { position: absolute; left: 422px; top: 125px; width: 48px; height: 48px; border: 3.500px solid #3b3dd2; border-radius: 50%; box-sizing: border-box; }
  .cursor { position: absolute; left: 424px; top: 135px; }
</style>
<cu-topbar></cu-topbar>
<div class="body">
  <cu-sidebar></cu-sidebar>
  <main>
    <cu-crumbs></cu-crumbs>
    <cu-tabs></cu-tabs>
    <cu-filters></cu-filters>
    <div class="lists">
      <cu-group kind="progress" label="IN PROGRESS" count="1">
        <cu-task name="Task 1" kind="progress" status="IN PROGRE..."></cu-task>
      </cu-group>
      <cu-group kind="todo" label="TO DO" count="2">
        <cu-task name="Task 2" kind="todo" status="TO DO"></cu-task>
        <cu-task name="Task 3" kind="todo" status="TO DO"></cu-task>
        <cu-new-task></cu-new-task>
      </cu-group>
    </div>
  </main>
</div>
<div class="ring"></div>
<svg class="cursor" width="12" height="18" viewBox="0 0 12 18"><path d="M1 1v13l3-3 2.500 5.500 2-1L6 10.500h4.500z" fill="#2a2a2e" stroke="#fff" stroke-width=".8"/></svg>
`;
class CuApp extends HTMLElement {
  constructor() {
    super();
    this.attachShadow({ mode: "open" });
    this.shadowRoot.appendChild(appTemp.content.cloneNode(true));
  }
}
customElements.define("cu-app", CuApp);
</script>
</body>
</html>
